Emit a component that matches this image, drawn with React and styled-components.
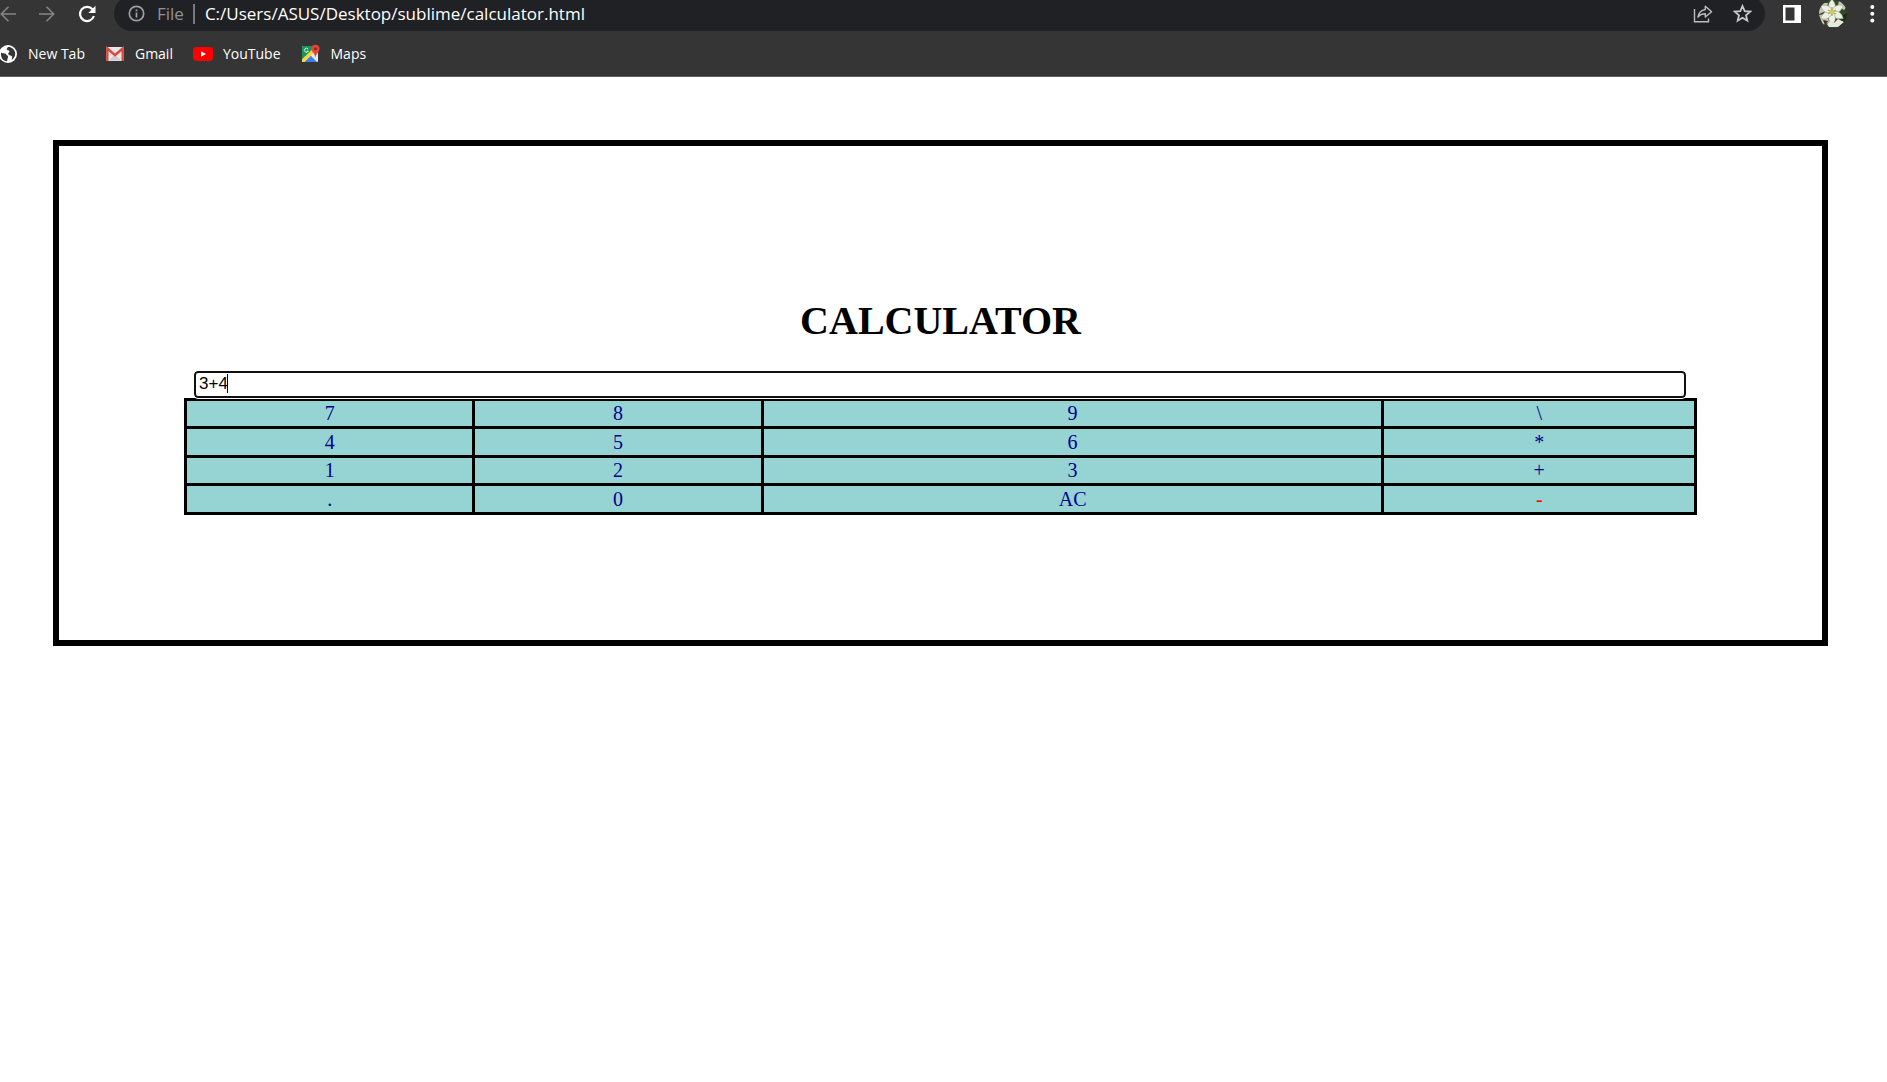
import React, { useState } from "react";
import styled, { createGlobalStyle } from "styled-components";

const GlobalStyle = createGlobalStyle`
  *, *::before, *::after { box-sizing: border-box; }
  body { margin: 0; background: #ffffff; }
`;

const uiFont = `"Open Sans", "Noto Sans", sans-serif`;
const serifFont = `"Liberation Serif", "Times New Roman", serif`;

const BrowserBar = styled.header`
  display: flex;
  flex-direction: column;
  height: 77px;
  overflow: hidden;
  background: #353535;
  border-bottom: 1px solid #5f5c5d;
  font-family: ${uiFont};
`;

const Toolbar = styled.div`
  display: flex;
  align-items: center;
  flex: none;
  height: 35px;
  margin-top: -4px;
  padding-right: 7px;
`;

const NavGroup = styled.div`
  display: flex;
  align-items: center;
  gap: 23px;
  margin-right: 18px;
`;

const IconButton = styled.button`
  display: flex;
  flex: none;
  align-items: center;
  justify-content: center;
  padding: 0;
  border: 0;
  background: none;
  color: ${(p) => p.$color || "#ffffff"};

  svg { display: block; }
`;

const AddressBar = styled.div`
  display: flex;
  align-items: center;
  flex: 1;
  min-width: 0;
  height: 35px;
  padding: 0 13px 0 14px;
  border-radius: 18px;
  background: #202124;
`;

const SchemeLabel = styled.label`
  margin-left: 12px;
  padding-right: 9px;
  border-right: 2px solid #77797c;
  color: #8f9195;
  font-size: 17px;
  line-height: 20px;
`;

const AddressInput = styled.input`
  flex: 1;
  min-width: 0;
  padding: 0 0 0 10px;
  border: 0;
  outline: 0;
  background: none;
  color: #ffffff;
  font-family: ${uiFont};
  font-size: 17px;
  line-height: 20px;
`;

const AddressActions = styled.div`
  display: flex;
  gap: 20px;
`;

const ProfileGroup = styled.div`
  display: flex;
  align-items: center;
  gap: 18px;
  margin-left: 18px;
`;

const Bookmarks = styled.nav`
  display: flex;
  align-items: center;
  flex: 1;
  gap: 20px;
`;

const Bookmark = styled.a`
  display: flex;
  align-items: center;
  gap: 10px;
  color: #ffffff;
  font-size: 14px;
  line-height: 20px;
  text-decoration: none;
`;

const Frame = styled.main`
  margin: 63px 59px 0 53px;
  padding: 125px;
  border: 6px solid #000000;
  font-family: ${serifFont};
`;

const Title = styled.h1`
  margin: 27px 0;
  font-size: 40px;
  line-height: 46px;
  text-align: center;
`;

const Display = styled.div`
  position: relative;
  display: flex;
  margin: 0 11px 0 10px;
`;

const DisplayInput = styled.input`
  width: 100%;
  height: 27px;
  padding: 0 3px 2px;
  border: 2px solid #101010;
  border-radius: 4px;
  outline: 1px solid #ffffff;
  background: #ffffff;
  color: #000000;
  caret-color: transparent;
  font-family: "Liberation Sans", Arial, sans-serif;
  font-size: 17px;
`;

const Caret = styled.span`
  position: absolute;
  top: 3px;
  left: 33px;
  width: 1px;
  height: 19px;
  background: #000000;
`;

const Keypad = styled.table`
  width: 100%;
  table-layout: fixed;
  border-collapse: collapse;
`;

const KeyColumn = styled.col`
  width: ${(p) => p.$width};
`;

const KeyRow = styled.tr`
  height: 28px;

  &:nth-child(even) { height: 29px; }
`;

const KeyCell = styled.td`
  padding: 0;
  border: 3px solid #000000;
  background: #96d4d4;
`;

const Key = styled.button`
  display: block;
  width: 100%;
  height: 25px;
  padding: 0;
  border: 0;
  background: none;
  color: ${(p) => (p.$alert ? "#ff0000" : "#00008b")};
  font-family: ${serifFont};
  font-size: 20px;
  line-height: 23px;
  text-align: center;
`;

const ArrowIcon = ({ forward }) => (
  <svg width="16" height="16" viewBox="0 0 16 16" fill="none" stroke="currentColor" strokeWidth="1.6">
    <path d={forward ? "M0 8H15M7.5 .8L14.7 8l-7.2 7.2" : "M16 8H1M8.5 .8L1.3 8l7.2 7.2"} />
  </svg>
);

const ReloadIcon = () => (
  <svg width="18" height="18" viewBox="0 0 18 18">
    <path d="M14.6 4.4A7.1 7.1 0 1 0 15.9 11" fill="none" stroke="currentColor" strokeWidth="2.2" />
    <path d="M17.5 .8V8H10.3z" fill="currentColor" />
  </svg>
);

const InfoIcon = () => (
  <svg width="17" height="17" viewBox="0 0 17 17" fill="none" stroke="#9aa0a6" strokeWidth="1.7">
    <circle cx="8.5" cy="8.5" r="7.2" />
    <path d="M8.5 7.6V12.4M8.5 4.6V6.3" />
  </svg>
);

const ShareIcon = () => (
  <svg width="20" height="18" viewBox="0 0 20 18" fill="none" stroke="currentColor" strokeWidth="1.4">
    <path d="M1.5 4V16.7H15.5V13.5" />
    <path d="M12.3 1.2L18.6 6.7L12.3 12V8.8C8.8 8.8 6.8 9.8 5 12.2C5.6 8 8 5.2 12.3 4.5z" strokeLinejoin="round" />
  </svg>
);

const StarIcon = () => (
  <svg width="19" height="19" viewBox="0 0 19 19" fill="none" stroke="currentColor" strokeWidth="1.8">
    <path d="M9.5 2L11.7 7.1L17.2 7.6L13 11.3L14.3 16.7L9.5 13.8L4.7 16.7L6 11.3L1.8 7.6L7.3 7.1z" />
  </svg>
);

const SidePanelIcon = () => (
  <svg width="18" height="18" viewBox="0 0 18 18">
    <path d="M0 0H18V18H0zM2.5 2.5V15.5H11.5V2.5z" fill="currentColor" fillRule="evenodd" />
  </svg>
);

const petals = [0, 60, 120, 180, 240, 300];

const AvatarIcon = () => (
  <svg width="28" height="28" viewBox="0 0 28 28">
    <defs>
      <clipPath id="avatar-clip"><circle cx="14" cy="14" r="14" /></clipPath>
    </defs>
    <g clipPath="url(#avatar-clip)">
      <rect width="28" height="28" fill="#34482a" />
      <path d="M0 3L9 3L7 11L0 14zM20 0L28 6L25 10L19 6zM0 15L8 14L10 22L4 25z" fill="#c5cdb8" />
      <path d="M22 16L28 13V24L20 28z" fill="#183017" />
      <path d="M4 20l5 1-3 4z" fill="#54241f" />
      {petals.map((angle) => (
        <path
          key={angle}
          d="M13 12C8 8 9 3 13 -1C17 4 18 8 13 12z"
          fill="#edf0e2"
          stroke="#8e9d78"
          strokeWidth=".5"
          transform={`rotate(${angle} 13 12)`}
        />
      ))}
      <path d="M8 24L12 20L15 23L19 19L25 22L19 27H10z" fill="#e6e9dc" />
      <path d="M13 7V16M9 10L17 14M17 10L9 14" stroke="#a6ad3d" strokeWidth="1.2" />
      <circle cx="13" cy="12" r="2" fill="#cdca70" />
    </g>
  </svg>
);

const MoreIcon = () => (
  <svg width="15" height="18" viewBox="0 0 15 18" fill="currentColor">
    <circle cx="7.3" cy="2" r="2" />
    <circle cx="7.3" cy="8.7" r="2" />
    <circle cx="7.3" cy="15.4" r="2" />
  </svg>
);

const GlobeIcon = () => (
  <svg width="18" height="18" viewBox="1 0 18 18">
    <circle cx="9" cy="9" r="9" fill="#ffffff" />
    <path d="M2 7.5C4 9 6 7.6 7 9.3C8 11 9.8 10.5 8.8 12.8L8 16.3C4 16 1.5 12.5 2 7.5z" fill="#353535" />
    <path d="M9 2C12 1.6 15.7 4 16.2 8C16.5 11 14.5 14 12.7 14.8C12.8 13 13.8 12 12.6 10.9C11.3 9.8 9.6 10.6 9.2 8.7C9 7.5 10.8 7.3 10.4 6C9.8 4.8 7.6 5.6 7.7 4z" fill="#353535" />
  </svg>
);

const GmailIcon = () => (
  <svg width="20" height="18" viewBox="0 0 20 18">
    <rect x="1" y="2" width="18" height="14" rx="1" fill="#e9e6e4" />
    <path d="M4 15.5L10 9.5L16 15.5z" fill="#d0cecc" />
    <path d="M2.3 16V3.5L10 10.2L17.7 3.5V16" fill="none" stroke="#d9473d" strokeWidth="2.4" />
  </svg>
);

const YouTubeIcon = () => (
  <svg width="20" height="18" viewBox="0 0 20 18">
    <rect x="0" y="2" width="20" height="14" rx="3.4" fill="#ff0000" />
    <path d="M8 6.2L13 9L8 11.8z" fill="#ffffff" />
  </svg>
);

const MapsIcon = () => (
  <svg width="20" height="20" viewBox="0 0 20 20">
    <rect x="1" y="2" width="16" height="16" rx="1" fill="#e8e8e8" />
    <path d="M1 3q0-1 1-1H14L14 5L1 17z" fill="#18975a" />
    <path d="M1 15.2L14 2.8L16 5.6L3 18H1z" fill="#fdd33c" />
    <path d="M3.5 18L9.8 11.7L16 18z" fill="#3f7ee8" />
    <path d="M11 10.5L17 16.5V8z" fill="#eeeeee" />
    <path d="M7.1 5.1A2 2 0 1 0 7.3 7.1H5.6" fill="none" stroke="#e9f5ee" strokeWidth="1" />
    <path d="M14.5 .8A4 4 0 0 0 10.5 4.8C10.5 8 13.8 9.3 14.5 14C15.2 9.3 18.5 8 18.5 4.8A4 4 0 0 0 14.5 .8z" fill="#e5453a" />
    <circle cx="14.5" cy="4.8" r="1.5" fill="#8d2820" />
  </svg>
);

const bookmarks = [
  { label: "New Tab", Icon: GlobeIcon },
  { label: "Gmail", Icon: GmailIcon },
  { label: "YouTube", Icon: YouTubeIcon },
  { label: "Maps", Icon: MapsIcon },
];

const columnWidths = ["19.1%", "19.1%", "41.1%", "20.7%"];

const keyRows = [
  ["7", "8", "9", "\\"],
  ["4", "5", "6", "*"],
  ["1", "2", "3", "+"],
  [".", "0", "AC", "-"],
];

export default function App() {
  const [expression, setExpression] = useState("3+4");
  const [address, setAddress] = useState("C:/Users/ASUS/Desktop/sublime/calculator.html");

  const press = (key) => setExpression((value) => (key === "AC" ? "" : value + key));

  return (
    <>
      <GlobalStyle />
      <BrowserBar>
        <Toolbar>
          <NavGroup>
            <IconButton $color="#858585" aria-label="Back"><ArrowIcon /></IconButton>
            <IconButton $color="#858585" aria-label="Forward"><ArrowIcon forward /></IconButton>
            <IconButton aria-label="Reload"><ReloadIcon /></IconButton>
          </NavGroup>
          <AddressBar>
            <InfoIcon />
            <SchemeLabel htmlFor="address">File</SchemeLabel>
            <AddressInput
              id="address"
              value={address}
              spellCheck={false}
              onChange={(e) => setAddress(e.target.value)}
            />
            <AddressActions>
              <IconButton $color="#bdbdbf" aria-label="Share"><ShareIcon /></IconButton>
              <IconButton $color="#c8c8ca" aria-label="Bookmark this page"><StarIcon /></IconButton>
            </AddressActions>
          </AddressBar>
          <ProfileGroup>
            <IconButton aria-label="Side panel"><SidePanelIcon /></IconButton>
            <IconButton aria-label="Profile"><AvatarIcon /></IconButton>
            <IconButton aria-label="Menu"><MoreIcon /></IconButton>
          </ProfileGroup>
        </Toolbar>
        <Bookmarks>
          {bookmarks.map(({ label, Icon }) => (
            <Bookmark key={label} href="#">
              <Icon />
              {label}
            </Bookmark>
          ))}
        </Bookmarks>
      </BrowserBar>
      <Frame>
        <Title id="title">CALCULATOR</Title>
        <Display>
          <DisplayInput
            aria-labelledby="title"
            value={expression}
            onChange={(e) => setExpression(e.target.value)}
          />
          {expression === "3+4" && <Caret />}
        </Display>
        <Keypad>
          <colgroup>
            {columnWidths.map((width, i) => <KeyColumn key={i} $width={width} />)}
          </colgroup>
          <tbody>
            {keyRows.map((row) => (
              <KeyRow key={row[0]}>
                {row.map((key) => (
                  <KeyCell key={key}>
                    <Key type="button" $alert={key === "-"} onClick={() => press(key)}>{key}</Key>
                  </KeyCell>
                ))}
              </KeyRow>
            ))}
          </tbody>
        </Keypad>
      </Frame>
    </>
  );
}
